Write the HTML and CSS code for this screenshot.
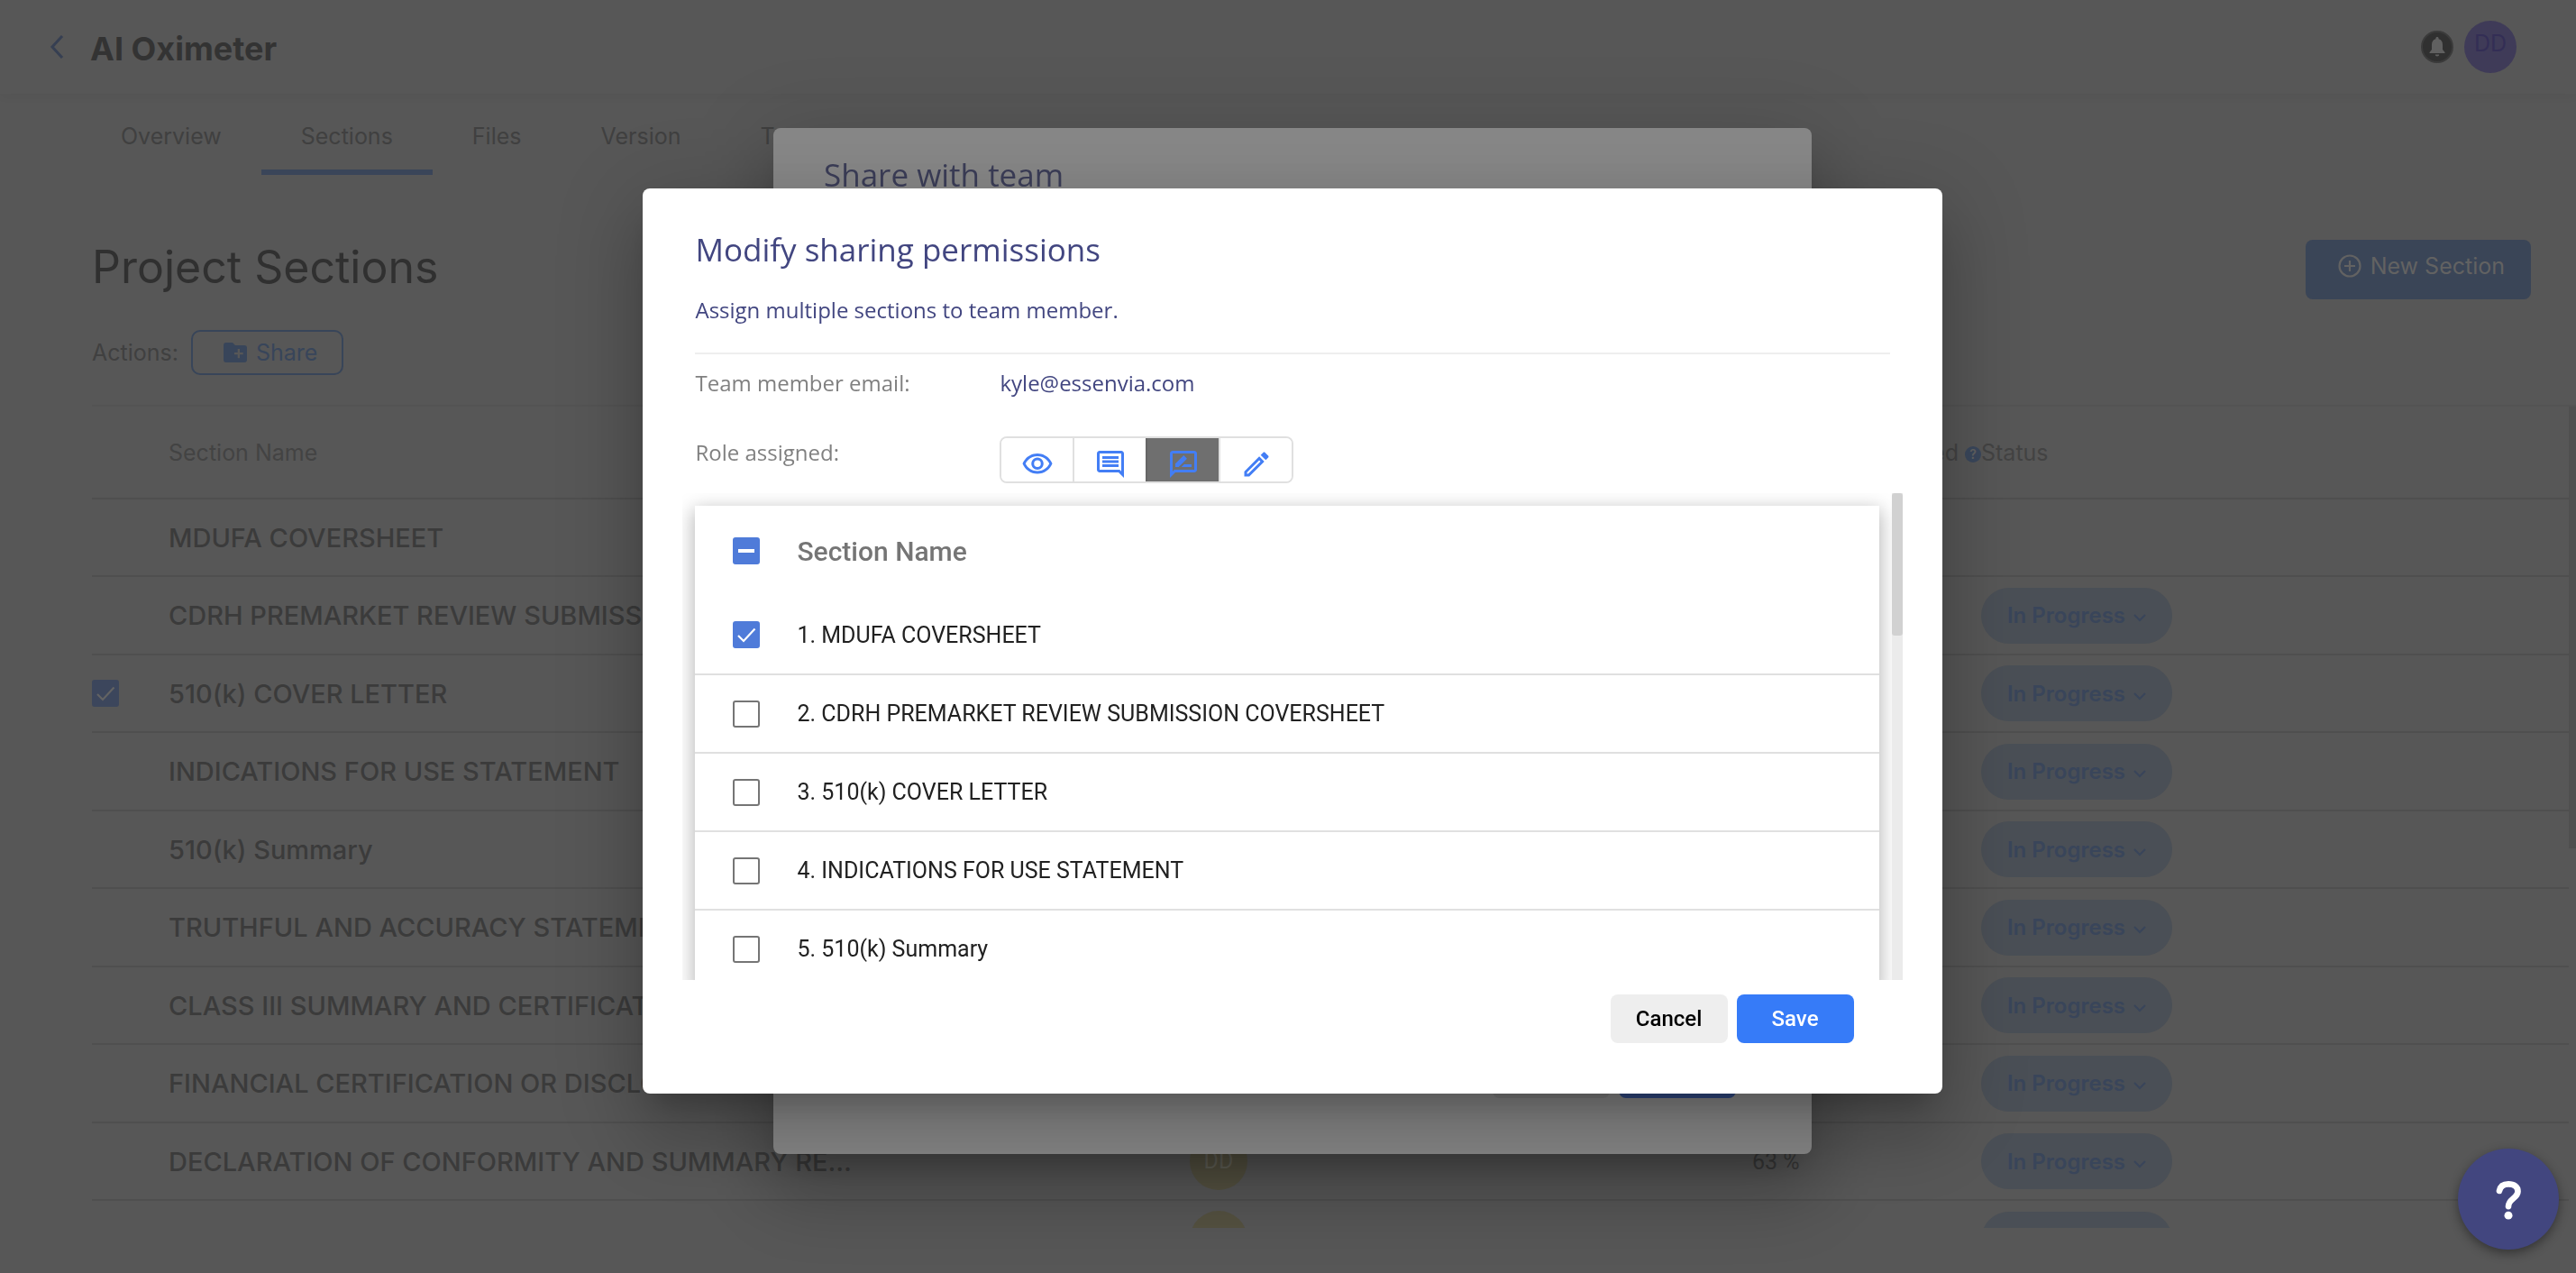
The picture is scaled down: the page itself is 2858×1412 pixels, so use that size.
FILE: index.html
```html
<!DOCTYPE html>
<html lang="en">
<head>
<meta charset="utf-8"/>
<meta content="width=device-width, initial-scale=1.0" name="viewport"/>
<title>AI Oximeter - Project Sections</title>
<link rel="stylesheet" href="styles.css">
</head>
<body>
<svg class="sprite" aria-hidden="true">
  <symbol id="i-check" viewBox="0 0 24 24"><path d="M3 13l6 6L21.500 5.500" fill="none" stroke="currentColor" stroke-width="2.2"/></symbol>
  <symbol id="i-down" viewBox="0 0 14 14"><path d="M1 4l6 6 6-6" fill="none" stroke="currentColor" stroke-width="2"/></symbol>
</svg>
<div class="page">
  <header class="topbar">
    <a class="back" href="#" aria-label="Back"><svg width="16" height="26" viewBox="0 0 16 26"><path d="M14 1L3 13l11 12" fill="none" stroke="currentColor" stroke-width="3"/></svg></a>
    <h1 class="project-name">AI Oximeter</h1>
    <button class="bell" aria-label="Notifications"><svg width="20" height="22" viewBox="0 0 20 22"><path d="M10 0c1 0 1.600.7 1.600 1.600v.7C14.600 3 16 5.600 16 8.500V14l2.500 3v1h-17v-1L4 14V8.500c0-2.900 1.400-5.500 4.400-6.200v-.7C8.400.7 9 0 10 0zM7.800 19.500h4.400c0 1.300-1 2-2.200 2s-2.200-.7-2.200-2z" fill="currentColor"/></svg></button>
    <button class="user">DD</button>
  </header>
  <nav class="tabs">
    <a href="#">Overview</a>
    <a class="active" href="#">Sections</a>
    <a href="#">Files</a>
    <a href="#">Version</a>
    <a href="#">Team</a>
  </nav>
  <main>
    <div class="heading">
      <h2>Project Sections</h2>
      <button class="new-section"><svg width="26" height="26" viewBox="0 0 26 26"><path d="M13 1.500a11.500 11.500 0 1 0 0 23 11.500 11.500 0 0 0 0-23zM13 7v12M7 13h12" fill="none" stroke="currentColor" stroke-width="2.200"/></svg>New Section</button>
    </div>
    <div class="actions">
      <span>Actions:</span>
      <button class="share"><svg width="26" height="22" viewBox="0 0 26 22"><path d="M3 0h7l3 3h10a3 3 0 0 1 3 3v13a3 3 0 0 1-3 3H3a3 3 0 0 1-3-3V3a3 3 0 0 1 3-3zm12.700 7v4H12v2.200h3.700v4H18v-4h3.700V11H18V7z" fill="currentColor" fill-rule="evenodd"/></svg>Share</button>
    </div>
    <div class="sections">
      <table class="sections-table">
        <thead>
          <tr><th class="col-pick"></th><th class="col-name">Section Name</th><th class="col-owner"></th><th class="col-done">Completed <i class="hint">?</i></th><th>Status</th></tr>
        </thead>
        <tbody id="sections"></tbody>
      </table>
      <div class="scrollbar"></div>
    </div>
  </main>
</div>

<div class="overlay">
  <section class="dialog dialog-team">
    <h2>Share with team</h2>
    <div class="dialog-buttons"><button class="btn" tabindex="-1">Cancel</button><button class="btn primary" tabindex="-1">Save</button></div>
  </section>
</div>

<div class="overlay">
  <section class="dialog dialog-perms" role="dialog" aria-labelledby="perms-title">
    <h2 id="perms-title">Modify sharing permissions</h2>
    <p class="lead">Assign multiple sections to team member.</p>
    <dl class="member">
      <dt>Team member email:</dt><dd>kyle@essenvia.com</dd>
      <dt>Role assigned:</dt>
      <dd>
        <div class="roles">
          <button aria-label="View"><svg width="36" height="36" viewBox="0 0 24 24"><path d="M12 6c3.790 0 7.170 2.130 8.820 5.500C19.170 14.870 15.790 17 12 17s-7.170-2.130-8.820-5.500C4.830 8.130 8.210 6 12 6m0-2C7 4 2.730 7.110 1 11.500 2.730 15.890 7 19 12 19s9.270-3.110 11-7.500C21.270 7.110 17 4 12 4zm0 5a2.500 2.500 0 0 1 0 5 2.500 2.500 0 0 1 0-5m0-2c-2.480 0-4.500 2.020-4.500 4.500S9.520 16 12 16s4.500-2.020 4.500-4.500S14.480 7 12 7z"/></svg></button>
          <button aria-label="Comment"><svg width="36" height="36" viewBox="0 0 24 24"><path d="M21.990 4c0-1.100-.89-2-1.990-2H4c-1.100 0-2 .9-2 2v12c0 1.100.9 2 2 2h14l4 4-.01-18zM20 4v13.170L18.830 16H4V4h16zM6 12h12v2H6zm0-3h12v2H6zm0-3h12v2H6z"/></svg></button>
          <button class="selected" aria-label="Review"><svg width="36" height="36" viewBox="0 0 24 24"><path d="M20 2H4c-1.100 0-2 .9-2 2v18l4-4h14c1.100 0 2-.9 2-2V4c0-1.100-.9-2-2-2zm0 14H5.170L4 17.170V4h16v12zm-9.500-2H18v-2h-5.500zm3.860-5.870c.2-.2.200-.51 0-.71l-1.770-1.770c-.2-.2-.51-.2-.71 0L6 11.530V14h2.470l5.890-5.870z"/></svg></button>
          <button aria-label="Edit"><svg width="36" height="36" viewBox="0 0 24 24"><path d="M14.060 9.020l.92.920L5.920 19H5v-.92l9.060-9.060M17.660 3c-.25 0-.51.100-.7.290l-1.830 1.830 3.750 3.750 1.830-1.830c.39-.39.390-1.020 0-1.410l-2.340-2.340c-.2-.2-.45-.29-.71-.29zm-3.600 3.190L3 17.250V21h3.750L17.810 9.940l-3.750-3.750z"/></svg></button>
        </div>
      </dd>
    </dl>
    <div class="picker">
      <div class="picker-view">
        <table class="picker-table">
          <thead><tr><th class="pick-cell"><label class="box on" for="pick-all"><input id="pick-all" type="checkbox" aria-label="All sections" checked/><i class="dash"></i></label></th><th>Section Name</th></tr></thead>
          <tbody id="picks"></tbody>
        </table>
      </div>
      <div class="picker-bar"><div class="picker-thumb"></div></div>
    </div>
    <div class="dialog-buttons"><button class="btn">Cancel</button><button class="btn primary">Save</button></div>
  </section>
</div>

<button class="help" aria-label="Help"><svg width="42" height="48" viewBox="0 0 44 50"><path d="M11.500 15.500C12.500 10 16 7.500 22 7.500c6.500 0 11 3 11 8.500 0 8-11 8.500-11 17.500" fill="none" stroke="currentColor" stroke-width="7" stroke-linecap="round"/><circle cx="22" cy="44" r="4.700" fill="currentColor"/></svg></button>

<script>
  const names = [
    "MDUFA COVERSHEET",
    "CDRH PREMARKET REVIEW SUBMISSION COVERSHEET",
    "510(k) COVER LETTER",
    "INDICATIONS FOR USE STATEMENT",
    "510(k) Summary",
    "TRUTHFUL AND ACCURACY STATEMENT",
    "CLASS III SUMMARY AND CERTIFICATION",
    "FINANCIAL CERTIFICATION OR DISCLOSURE",
    "DECLARATION OF CONFORMITY AND SUMMARY REPORTS",
    ""
  ];
  const check = '<svg width="24" height="24"><use href="#i-check"/></svg>';
  const box = (id, on, label) =>
    `<label class="box ${on ? "on" : ""}" for="${id}"><input id="${id}" type="checkbox" aria-label="${label}" ${on ? "checked" : ""}/>${on ? check : ""}</label>`;

  document.getElementById("sections").innerHTML = names.map((name, i) => `
    <tr>
      <td>${i === 2 ? box("row-" + i, true, name) : ""}</td>
      <td class="name">${name}</td>
      <td>${i > 7 ? `<span class="owner">${i === 8 ? "DD" : ""}</span>` : ""}</td>
      <td class="done">${i === 8 ? "63 %" : ""}</td>
      <td>${i > 0 ? `<button class="status">${i < 9 ? "In Progress" : ""}<svg width="14" height="14"><use href="#i-down"/></svg></button>` : ""}</td>
    </tr>`).join("");

  document.getElementById("picks").innerHTML = names.slice(0, 5).map((name, i) => `
    <tr>
      <td class="pick-cell">${box("pick-" + i, i === 0, name)}</td>
      <td>${i + 1}. ${name}</td>
    </tr>`).join("");
</script>
</body>
</html>
```

FILE: styles.css
```css
* {
  box-sizing: border-box;
}
body {
  margin: 0;
  height: 100vh;
  overflow: hidden;
  background: #575757;
  color: #3b3b3b;
  font-family: Inter, "Liberation Sans", sans-serif;
  font-size: 25px;
}
h1, h2, p, dl, dd {
  margin: 0;
}
button {
  border: none;
  padding: 0;
  font: inherit;
  cursor: pointer;
}
a {
  color: inherit;
  text-decoration: none;
}
svg {
  display: block;
}
.sprite {
  display: none;
}

/* page behind the dialogs */
.page {
  height: 100vh;
  display: flex;
  flex-direction: column;
}
.topbar {
  display: flex;
  align-items: center;
  height: 104px;
  padding: 0 66px 0 55px;
  box-shadow: 0 4px 10px rgba(0, 0, 0, 0.03);
}
.back {
  color: #363f52;
}
.project-name {
  flex: 1;
  margin-left: 29px;
  padding-top: 4px;
  font-size: 36px;
  font-weight: 700;
  color: #333333;
}
.bell {
  display: grid;
  place-items: center;
  width: 36px;
  height: 36px;
  margin-right: 12px;
  border: 2px solid #3b3b3b;
  border-radius: 50%;
  background: #303030;
  color: #606060;
}
.user {
  width: 58px;
  height: 58px;
  padding-bottom: 8px;
  border-radius: 50%;
  background: #3f3b58;
  color: #332e55;
}
.tabs {
  display: flex;
  padding: 30px 90px 0;
  color: #404040;
}
.tabs a {
  height: 60px;
  padding: 0 44px;
  line-height: 34px;
  border-bottom: 6px solid transparent;
}
.tabs .active {
  border-color: #3a4559;
}
main {
  flex: 1;
  min-height: 0;
  display: flex;
  flex-direction: column;
  padding: 60px 0 50px 102px;
}
.heading {
  display: flex;
  justify-content: space-between;
  align-items: center;
  height: 90px;
  padding-right: 50px;
}
.heading h2 {
  padding-bottom: 6px;
  font-size: 50px;
  font-weight: 400;
  color: #303030;
}
.new-section {
  display: flex;
  gap: 10px;
  align-items: center;
  height: 66px;
  padding: 0 29px 8px 36px;
  border-radius: 8px;
  background: #3a4557;
  color: #626262;
}
.actions {
  display: flex;
  align-items: center;
  gap: 14px;
  margin-top: 22px;
  color: #404040;
}
.share {
  display: flex;
  align-items: center;
  gap: 10px;
  height: 50px;
  padding: 0 27px 0 34px;
  border: 2px solid #384559;
  border-radius: 10px;
  background: none;
  color: #38455a;
}
.sections {
  flex: 1;
  min-height: 0;
  display: flex;
  margin-top: 33px;
  overflow: hidden;
  border-top: 2px solid #535353;
}
.sections-table {
  flex: 1;
  table-layout: fixed;
  border-collapse: collapse;
}
.sections-table th {
  height: 102px;
  padding: 0;
  text-align: left;
  font-weight: 400;
  color: #434343;
  border-bottom: 2px solid #4f4f4f;
}
.sections-table td {
  height: 86px;
  padding: 0;
  border-bottom: 2px solid #4f4f4f;
}
.sections-table tr:nth-child(even) td {
  height: 87px;
}
.col-pick {
  width: 85px;
}
.col-name {
  width: 1133px;
}
.col-owner {
  width: 624px;
}
.col-done {
  width: 254px;
  white-space: nowrap;
}
.sections-table .col-done {
  text-align: right;
}
.sections-table .name {
  max-width: 760px;
  padding-right: 370px;
  overflow: hidden;
  white-space: nowrap;
  text-overflow: ellipsis;
  font-size: 29px;
  font-weight: 500;
}
.hint {
  display: inline-block;
  width: 18px;
  border-radius: 50%;
  background: #3a475c;
  color: #626262;
  font-size: 14px;
  font-style: normal;
  font-weight: 600;
  line-height: 18px;
  text-align: center;
  vertical-align: middle;
}
.owner {
  display: block;
  width: 64px;
  height: 64px;
  border-radius: 50%;
  background: #555241;
  color: #65645a;
  font-family: Roboto, "Liberation Sans", sans-serif;
  line-height: 64px;
  text-align: center;
}
.done {
  font-family: Roboto, "Liberation Sans", sans-serif;
}
.status {
  display: flex;
  align-items: center;
  justify-content: center;
  gap: 9px;
  width: 212px;
  height: 62px;
  border-radius: 31px;
  background: #4a4f56;
  color: #39455a;
  font-size: 24px;
  font-weight: 600;
}
.status svg {
  margin-top: 5px;
}
.scrollbar {
  width: 8px;
  height: 490px;
  background: #4f4f4f;
}

/* dialogs */
.overlay {
  position: fixed;
  inset: 0;
  display: grid;
  place-items: center;
  padding: 10px 0 0 10px;
}
.dialog {
  display: flex;
  flex-direction: column;
  border-radius: 8px;
  font-family: "Open Sans", "Noto Sans", sans-serif;
  box-shadow: 0 22px 30px -14px rgba(0, 0, 0, 0.2), 0 48px 76px 6px rgba(0, 0, 0, 0.14), 0 18px 92px 16px rgba(0, 0, 0, 0.12);
}
.dialog h2 {
  font-size: 35px;
  font-weight: 500;
  line-height: 52px;
  color: #424680;
}
.dialog-team {
  width: 40.45%;
  height: 1138px;
  padding: 26px 84px 62px 56px;
  justify-content: space-between;
  background: #888888;
}
.dialog-team h2 {
  color: #3c3e58;
}
.dialog-perms {
  width: 50.6%;
  padding: 42px 58px 56px;
  background: #ffffff;
}
.lead {
  padding: 18px 0 24px;
  border-bottom: 2px solid #eeeeee;
  font-size: 24px;
  font-weight: 500;
  line-height: 46px;
  color: #424680;
}
.member {
  display: grid;
  grid-template-columns: 338px 1fr;
  font-size: 24px;
  font-weight: 500;
  color: #808080;
}
.member dt, .member dd {
  height: 77px;
  line-height: 64px;
}
.member dd {
  color: #424680;
}
.roles {
  display: flex;
  width: fit-content;
  height: 52px;
  margin-top: 14px;
  overflow: hidden;
  border: 2px solid #e0e0e0;
  border-radius: 8px;
}
.roles button {
  display: grid;
  place-items: center;
  width: 81px;
  padding-top: 10px;
  border-left: 2px solid #e0e0e0;
  background: #ffffff;
}
.roles button:first-child {
  width: 79px;
  border-left: none;
}
.roles .selected {
  background: #6f6f6f;
  border-color: #666666;
}
.roles svg {
  fill: #437ef5;
}
.picker {
  display: flex;
  height: 540px;
  margin: 0 -14px;
}
.picker-view {
  flex: 1;
  padding: 14px 14px 0;
  overflow: hidden;
}
.picker-table {
  width: 100%;
  border-collapse: collapse;
  font-family: Roboto, "Liberation Sans", sans-serif;
  color: #212121;
  box-shadow: 0 6px 20px 2px rgba(0, 0, 0, 0.28);
  background: #ffffff;
}
.picker-table th {
  height: 100px;
  padding: 0;
  text-align: left;
  font-size: 30px;
  font-weight: 500;
  color: #757575;
}
.picker-table td {
  height: 87px;
  padding: 0;
  border-bottom: 2px solid #e0e0e0;
}
.picker-table .pick-cell {
  width: 113px;
  padding-left: 42px;
}
.box {
  display: grid;
  place-items: center;
  width: 30px;
  height: 30px;
  border: 2px solid #757575;
  border-radius: 3px;
}
.box input {
  grid-area: 1 / 1;
  width: 20px;
  height: 20px;
  margin: 0;
  opacity: 0;
}
.box svg, .dash {
  grid-area: 1 / 1;
}
.box.on {
  border-color: #4f7bd9;
  background: #4f7bd9;
  color: #ffffff;
}
.sections .box.on {
  border-color: #3c465c;
  background: #3c465c;
  color: #636363;
}
.dash {
  width: 18px;
  height: 4px;
  background: #ffffff;
}
.picker-bar {
  width: 12px;
  background: #ebebeb;
}
.picker-thumb {
  height: 158px;
  border-radius: 3px;
  background: #d1d1d1;
}
.dialog-buttons {
  display: flex;
  justify-content: flex-end;
  gap: 10px;
}
.dialog-perms .dialog-buttons {
  padding: 16px 40px 0 0;
}
.btn {
  width: 130px;
  height: 54px;
  border-radius: 8px;
  background: #eeeeee;
  color: #000000;
  font-family: Roboto, "Liberation Sans", sans-serif;
  font-size: 24px;
  font-weight: 500;
}
.primary {
  background: #367bf8;
  color: #ffffff;
}
.dialog-team .btn {
  background: #7e7e7e;
}
.dialog-team .primary {
  background: #314a83;
}
.help {
  position: fixed;
  right: 19px;
  bottom: 26px;
  display: grid;
  place-items: center;
  width: 112px;
  height: 112px;
  border-radius: 50%;
  background: #42467f;
  color: #ffffff;
  box-shadow: 0 4px 12px rgba(0, 0, 0, 0.4);
}
```
